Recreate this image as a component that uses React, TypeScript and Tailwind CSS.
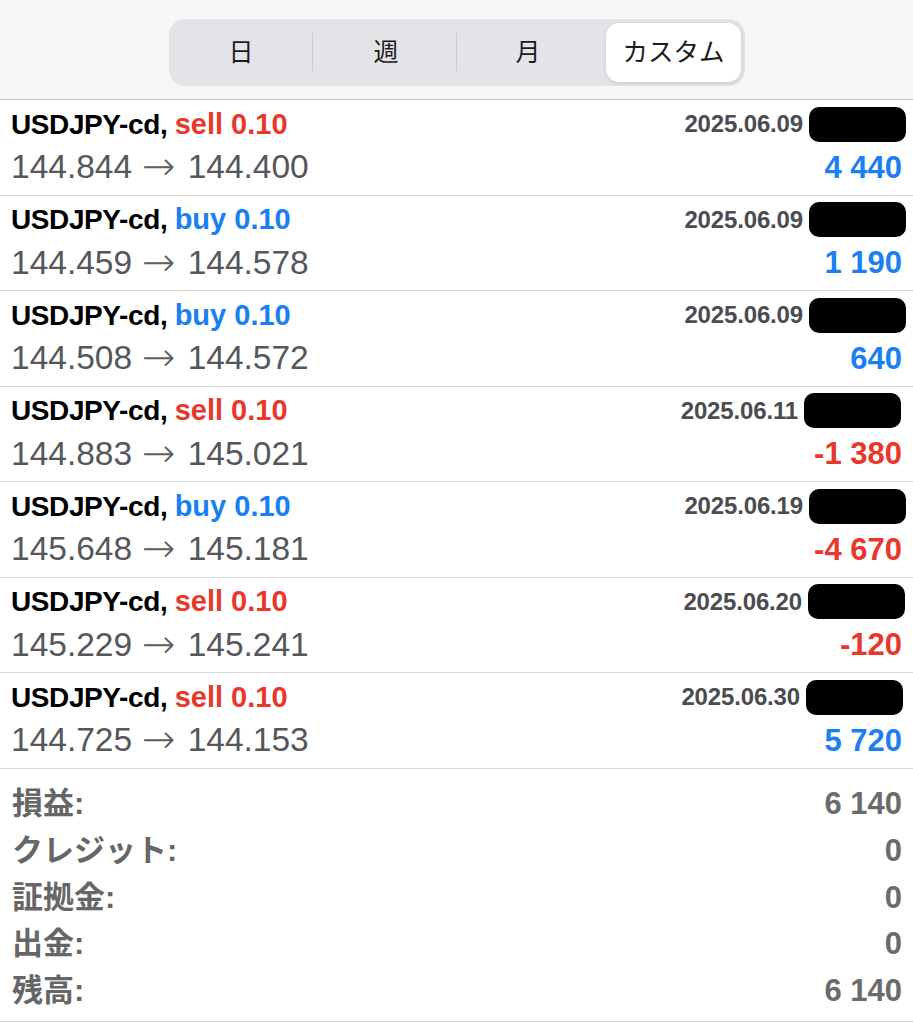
import React from 'react';

type Trade = {
  side: 'sell' | 'buy';
  date: string;
  open: string;
  close: string;
  profit: string;
  boxShift: string;
};

const trades: Trade[] = [
  { side: 'sell', date: '2025.06.09', open: '144.844', close: '144.400', profit: '4 440', boxShift: 'mr-0' },
  { side: 'buy', date: '2025.06.09', open: '144.459', close: '144.578', profit: '1 190', boxShift: 'mr-0' },
  { side: 'buy', date: '2025.06.09', open: '144.508', close: '144.572', profit: '640', boxShift: 'mr-0' },
  { side: 'sell', date: '2025.06.11', open: '144.883', close: '145.021', profit: '-1 380', boxShift: 'mr-[5px]' },
  { side: 'buy', date: '2025.06.19', open: '145.648', close: '145.181', profit: '-4 670', boxShift: 'mr-0' },
  { side: 'sell', date: '2025.06.20', open: '145.229', close: '145.241', profit: '-120', boxShift: 'mr-[1px]' },
  { side: 'sell', date: '2025.06.30', open: '144.725', close: '144.153', profit: '5 720', boxShift: 'mr-[3px]' },
];

const summary = [
  { label: '損益:', value: '6 140' },
  { label: 'クレジット:', value: '0' },
  { label: '証拠金:', value: '0' },
  { label: '出金:', value: '0' },
  { label: '残高:', value: '6 140' },
];

function TradeRow({ t }: { t: Trade }) {
  const sideColor = t.side === 'sell' ? 'text-[#e8382b]' : 'text-[#1a7ff2]';
  const loss = t.profit.startsWith('-');
  return (
    <div className="h-[95.5px] border-b border-[#dadada] pl-[11px] pr-[7px] pt-[6px] flex flex-col">
      <div className="h-[36px] flex items-center justify-between">
        <div className="font-bold leading-none">
          <span className="text-[28px] tracking-[-0.4px] text-black">USDJPY-cd, </span>
          <span className={`text-[29px] ${sideColor}`}>
            {t.side} 0.10
          </span>
        </div>
        <div className={`flex items-center gap-[6px] ${t.boxShift}`}>
          <span className="text-[24px] font-bold text-[#4b4b50] tracking-[-0.15px] leading-none">
            {t.date}
          </span>
          <div className="w-[97px] h-[35px] bg-black rounded-[10px]" />
        </div>
      </div>
      <div className="mt-[2px] h-[46px] flex items-center justify-between pr-[4px]">
        <span className="text-[33.5px] text-[#56565b] leading-none flex items-center">
          <span>{t.open}</span>
          <span className="font-['DejaVu_Sans',sans-serif] text-[40px] font-light ml-[10px] mr-[12px] leading-none -translate-y-[1px] text-[#5e5e63]">
            →
          </span>
          <span>{t.close}</span>
        </span>
        <span
          className={`text-[31px] font-bold leading-none ${
            loss ? 'text-[#e8382b]' : 'text-[#1a7ff2]'
          }`}
        >
          {t.profit}
        </span>
      </div>
    </div>
  );
}

export default function App() {
  const tabs = ['日', '週', '月', 'カスタム'];
  return (
    <div className="w-[913px] min-h-[1024px] bg-white font-['Liberation_Sans','Noto_Sans_CJK_JP',sans-serif]">
      {/* period selector */}
      <div className="h-[100px] bg-[#f7f7f7] border-b border-[#c8c8c8] flex justify-center pt-[19px] pl-[1px]">
        <div className="w-[576px] h-[67px] bg-[#e4e4e8] rounded-[16px] p-[4px] grid grid-cols-4">
          {tabs.map((tab, i) => (
            <div key={tab} className="relative flex items-center justify-center">
              {i === 3 ? (
                <div className="ml-[7px] w-full h-full bg-white rounded-[13px] shadow-[0_1px_4px_rgba(0,0,0,0.12)] flex items-center justify-center text-[25.5px] text-[#1c1c1e]">
                  {tab}
                </div>
              ) : (
                <span className={`text-[25px] text-[#1c1c1e] ${i === 0 ? 'mr-[6px]' : ''}`}>{tab}</span>
              )}
              {i < 2 && (
                <div className={`absolute top-[10px] bottom-[11px] w-px bg-[#c9c9ce] ${i === 0 ? 'right-[2px]' : 'right-0'}`} />
              )}
            </div>
          ))}
        </div>
      </div>

      {/* trades */}
      <div>
        {trades.map((t, i) => (
          <TradeRow key={i} t={t} />
        ))}
      </div>

      {/* totals */}
      <div className="pt-[12px] pb-[7px] pl-[12px] pr-[11px] border-b border-[#dadada]">
        {summary.map((s) => (
          <div key={s.label} className="h-[46.7px] flex items-center justify-between">
            <span className="text-[31px] font-bold text-[#666666] leading-none">{s.label}</span>
            <span className="text-[31px] font-bold text-[#6b6b6b] leading-none">
              {s.value}
            </span>
          </div>
        ))}
      </div>
    </div>
  );
}
